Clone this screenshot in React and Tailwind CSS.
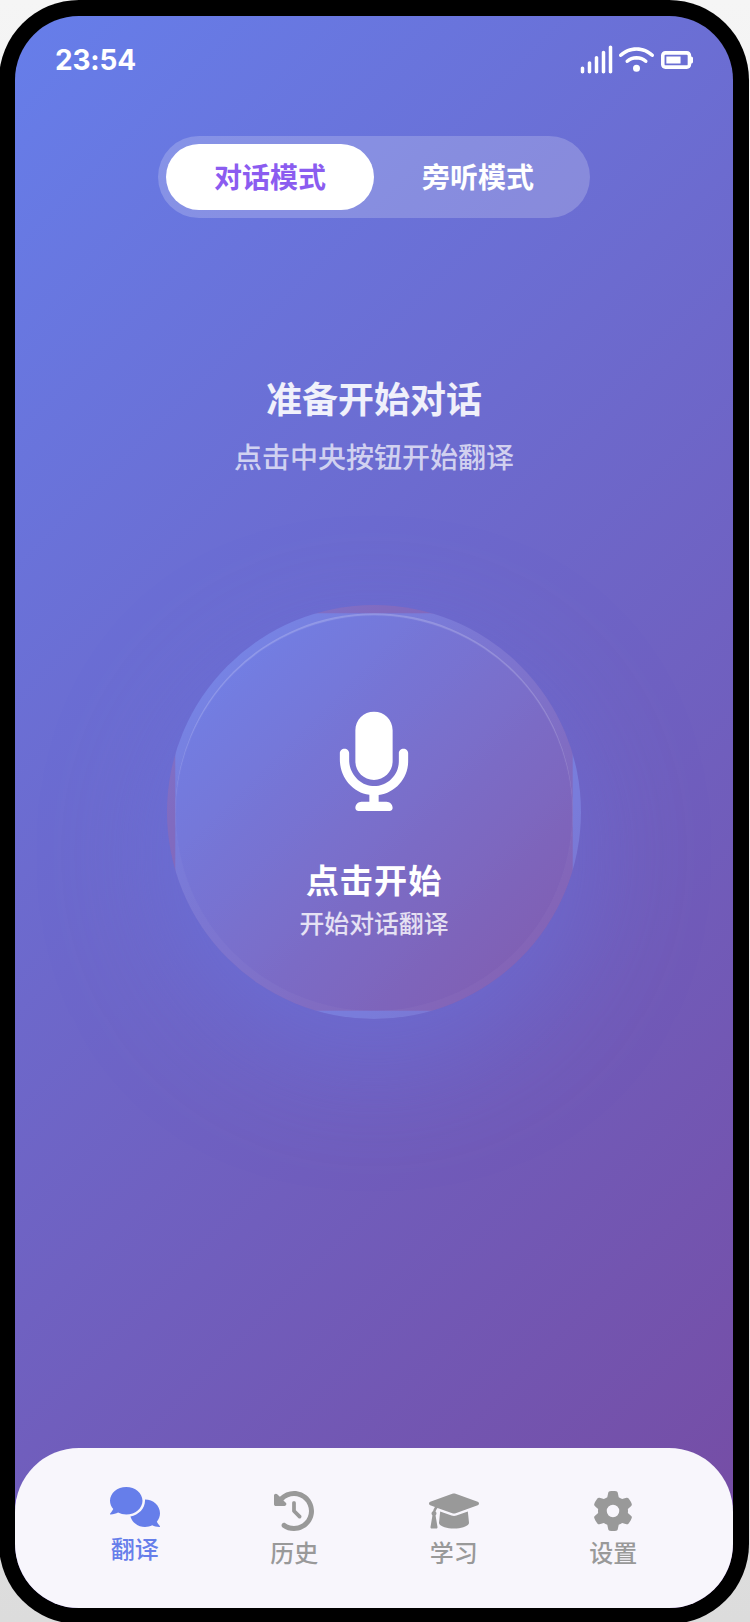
import React, { useState } from 'react';
import { FaBatteryThreeQuarters, FaSignal, FaWifi } from 'react-icons/fa6';

const modes = [
  { id: 'dialog', label: '对话模式' },
  { id: 'listen', label: '旁听模式' },
];

const micPath =
  'M192 352c53.03 0 96-42.97 96-96v-160c0-53.03-42.97-96-96-96s-96 42.97-96 96v160C96 309 138.1 352 192 352zM344 192C330.7 192 320 202.7 320 215.1V256c0 73.33-61.97 132.4-136.3 127.7c-66.08-4.169-119.7-66.59-119.7-132.8L64 215.1C64 202.7 53.25 192 40 192S16 202.7 16 215.1v32.15c0 89.66 63.97 169.6 152 181.7V464H128c-18.19 0-32.84 15.18-31.96 33.57C96.43 505.8 103.8 512 112 512h160c8.222 0 15.57-6.216 15.96-14.43C288.8 479.2 274.2 464 256 464h-40v-33.77C301.7 418.5 368 344.9 368 256V215.1C368 202.7 357.3 192 344 192z';

const navItems = [
  {
    id: 'translate',
    label: '翻译',
    viewBox: '0 0 640 512',
    path: 'M416 176C416 78.8 322.9 0 208 0S0 78.8 0 176c0 39.57 15.62 75.96 41.67 105.4c-16.39 32.76-39.23 57.32-39.59 57.68c-2.1 2.205-2.67 5.475-1.441 8.354C1.9 350.3 4.602 352 7.66 352c38.35 0 70.76-11.12 95.74-24.04C134.2 343.1 169.8 352 208 352C322.9 352 416 273.2 416 176zM599.6 443.7C624.8 413.9 640 376.6 640 336C640 238.8 554 160 448 160c-.3145 0-.6191 .041-.9336 .043C447.5 165.3 448 170.6 448 176c0 98.62-79.68 181.2-186.1 202.5C282.7 455.1 357.1 512 448 512c33.69 0 65.32-8.008 92.85-21.98C565.2 502 596.1 512 632.3 512c3.059 0 5.76-1.725 7.02-4.605c1.229-2.879 .6582-6.148-1.441-8.354C637.6 498.7 615.9 475.3 599.6 443.7z',
  },
  {
    id: 'history',
    label: '历史',
    viewBox: '0 0 512 512',
    path: 'M75 75L41 41C25.9 25.9 0 36.6 0 57.9V168c0 13.3 10.7 24 24 24H134.1c21.4 0 32.1-25.9 17-41l-30.8-30.8C155 85.5 203 64 256 64c106 0 192 86 192 192s-86 192-192 192c-40.8 0-78.6-12.7-109.7-34.4c-14.5-10.1-34.4-6.6-44.6 7.9s-6.6 34.4 7.9 44.6C151.2 495 201.7 512 256 512c141.4 0 256-114.6 256-256S397.4 0 256 0C185.3 0 121.3 28.7 75 75zm181 53c-13.3 0-24 10.7-24 24V256c0 6.4 2.5 12.5 7 17l72 72c9.4 9.4 24.6 9.4 33.9 0s9.4-24.6 0-33.9l-65-65V152c0-13.3-10.7-24-24-24z',
  },
  {
    id: 'learn',
    label: '学习',
    viewBox: '0 0 640 512',
    path: 'M623.1 136.9l-282.7-101.2c-13.73-4.91-28.7-4.91-42.43 0L16.05 136.9C6.438 140.4 0 149.6 0 160s6.438 19.65 16.05 23.09L76.07 204.6c-11.89 15.8-20.26 34.16-24.55 53.95C40.05 263.4 32 274.8 32 288c0 9.953 4.814 18.49 11.94 24.36l-24.83 149C17.48 471.1 25 480 34.89 480H93.11c9.887 0 17.41-8.879 15.78-18.63l-24.83-149C91.19 306.5 96 297.1 96 288c0-10.29-5.174-19.03-12.72-24.89c4.252-17.76 12.88-33.82 24.94-47.03l190.6 68.23c13.73 4.91 28.7 4.91 42.43 0l282.7-101.2C633.6 179.6 640 170.4 640 160S633.6 140.4 623.1 136.9zM351.1 314.4C341.7 318.5 330.9 320 320 320c-10.92 0-21.69-1.867-32-5.555L142.8 262.5L128 405.3C128 446.6 213.1 480 320 480c105.1 0 192-33.4 192-74.67l-14.78-142.9L351.1 314.4z',
  },
  {
    id: 'settings',
    label: '设置',
    viewBox: '0 0 512 512',
    path: 'M495.9 166.6c3.2 8.7 .5 18.4-6.4 24.6l-43.3 39.4c1.1 8.3 1.7 16.8 1.7 25.4s-.6 17.1-1.7 25.4l43.3 39.4c6.9 6.2 9.6 15.9 6.4 24.6c-4.4 11.9-9.7 23.3-15.8 34.3l-4.7 8.1c-6.6 11-14 21.4-22.1 31.2c-5.9 7.2-15.7 9.6-24.5 6.8l-55.7-17.7c-13.4 10.3-28.2 18.9-44 25.4l-12.5 57.1c-2 9.1-9 16.3-18.2 17.8c-13.8 2.3-28 3.5-42.5 3.5s-28.7-1.2-42.5-3.5c-9.2-1.5-16.2-8.7-18.2-17.8l-12.5-57.1c-15.8-6.5-30.6-15.1-44-25.4L83.1 425.9c-8.8 2.8-18.6 .3-24.5-6.8c-8.1-9.8-15.5-20.2-22.1-31.2l-4.7-8.1c-6.1-11-11.4-22.4-15.8-34.3c-3.2-8.7-.5-18.4 6.4-24.6l43.3-39.4C64.6 273.1 64 264.6 64 256s.6-17.1 1.7-25.4L22.4 191.2c-6.9-6.2-9.6-15.9-6.4-24.6c4.4-11.9 9.7-23.3 15.8-34.3l4.7-8.1c6.6-11 14-21.4 22.1-31.2c5.9-7.2 15.7-9.6 24.5-6.8l55.7 17.7c13.4-10.3 28.2-18.9 44-25.4l12.5-57.1c2-9.1 9-16.3 18.2-17.8C227.3 1.2 241.5 0 256 0s28.7 1.2 42.5 3.5c9.2 1.5 16.2 8.7 18.2 17.8l12.5 57.1c15.8 6.5 30.6 15.1 44 25.4l55.7-17.7c8.8-2.8 18.6-.3 24.5 6.8c8.1 9.8 15.5 20.2 22.1 31.2l4.7 8.1c6.1 11 11.4 22.4 15.8 34.3zM256 336a80 80 0 1 0 0-160 80 80 0 1 0 0 160z',
  },
];

const StatusBar = () => (
  <div className="flex h-[88px] shrink-0 items-center justify-between px-10 text-[28px] text-white">
    <span className="font-bold tracking-[-0.2px]">23:54</span>
    <div className="flex items-center">
      <FaSignal className="mr-[5px] mb-[2px] size-[35px]" />
      <FaWifi className="mr-[7px] mb-[2px] size-[35px]" />
      <FaBatteryThreeQuarters className="mb-px size-[32px]" />
    </div>
  </div>
);

const ModeSwitch = ({ mode, onChange }) => (
  <div className="mt-8 flex rounded-full bg-white/20 p-2">
    {modes.map((item) => (
      <button
        key={item.id}
        type="button"
        onClick={() => onChange(item.id)}
        className={`h-[66px] w-[208px] rounded-full pt-0.5 text-[28px] font-semibold ${mode === item.id ? 'bg-white text-[#8b5cf0]' : 'text-white'}`}
      >
        {item.label}
      </button>
    ))}
  </div>
);

const MicButton = () => (
  <button
    type="button"
    className="mt-[133px] flex h-[400px] w-[400px] shrink-0 scale-[1.035] flex-col items-center rounded-full border-8 border-white/3 bg-[linear-gradient(135deg,rgba(114,142,247,0.7)_0%,rgba(138,90,165,0.7)_100%)] pt-[94.5px] text-white shadow-[0_40px_120px_rgba(102,126,234,0.4),inset_0_2px_1px_rgba(255,255,255,0.22)]"
  >
    <svg viewBox="0 0 384 512" fill="currentColor" className="h-24 w-[72px]">
      <path d={micPath} />
    </svg>
    <span className="mt-[44px] text-[32px] leading-[48px] font-bold tracking-[1px]">点击开始</span>
    <span className="text-[24px] leading-[35px] font-medium text-white/80">开始对话翻译</span>
  </button>
);

const BottomNav = ({ active, onChange }) => (
  <nav className="flex h-40 shrink-0 rounded-t-[64px] bg-[#f8f6fc] px-10">
    {navItems.map(({ id, label, viewBox, path }) => (
      <button
        key={id}
        type="button"
        onClick={() => onChange(id)}
        className={`flex flex-1 flex-col items-center pt-[43px] ${active === id ? '-translate-y-1 text-[#667eea]' : 'text-[#999999]'}`}
      >
        <svg viewBox={viewBox} fill="currentColor" className="h-10 w-auto">
          <path d={path} />
        </svg>
        <span className="mt-[5px] text-[24px] leading-[36px] font-medium">{label}</span>
      </button>
    ))}
  </nav>
);

const App = () => {
  const [mode, setMode] = useState('dialog');
  const [tab, setTab] = useState('translate');

  return (
    <div className="h-[1622px] w-[750px] overflow-hidden bg-[linear-gradient(180deg,#f5f5f5_0%,#dcdcdc_100%)] font-['Inter','Noto_Sans_CJK_SC',sans-serif]">
      <div className="-ml-px h-[1624px] w-[750px] rounded-[80px] bg-black p-4">
        <div className="flex h-full flex-col overflow-hidden rounded-[64px] bg-[linear-gradient(135deg,#667eea_0%,#764ba2_100%)]">
          <StatusBar />
          <main className="flex flex-1 flex-col items-center">
            <ModeSwitch mode={mode} onChange={setMode} />
            <h1 className="mt-[155px] text-[36px] leading-[54px] font-semibold text-white/90">准备开始对话</h1>
            <p className="mt-[10px] text-[28px] leading-[42px] font-medium text-white/70">点击中央按钮开始翻译</p>
            <MicButton />
          </main>
          <BottomNav active={tab} onChange={setTab} />
        </div>
      </div>
    </div>
  );
};

export default App;
